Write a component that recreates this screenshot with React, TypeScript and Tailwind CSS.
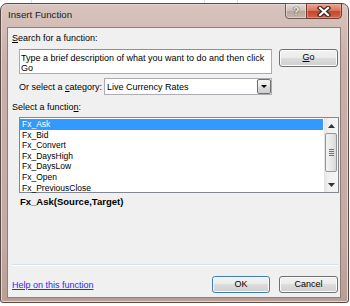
import React from 'react';

const font = { fontFamily: '"Liberation Sans", Arial, sans-serif' };

const btn =
  'flex items-center justify-center rounded-[3px] border text-[9px] text-black bg-[linear-gradient(#f2f2f2,#ebebeb_50%,#dddddd_50%,#cfcfcf)] shadow-[inset_0_0_0_1px_#fbfbfb]';

const functions = ['Fx_Ask', 'Fx_Bid', 'Fx_Convert', 'Fx_DaysHigh', 'Fx_DaysLow', 'Fx_Open', 'Fx_PreviousClose'];

function Caret({ up }: { up?: boolean }) {
  return (
    <svg width="7" height="4" viewBox="0 0 7 4">
      <path d={up ? 'M0 4 L3.5 0 L7 4 Z' : 'M0 0 L7 0 L3.5 4 Z'} fill="#333" />
    </svg>
  );
}

function TitleButtons() {
  return (
    <div className="flex -mt-[1px] mr-[6px]">
      <div className="w-[22px] h-[16px] flex items-center justify-center border border-[#6d5c57] rounded-bl-[4px] bg-[linear-gradient(#e6dcd8,#cdbdb8_50%,#b9a39c_50%,#c8b6b0)] shadow-[inset_0_0_0_1px_#f3ecea80]">
        <span className="text-[11px] font-bold leading-none text-[#f4f4f4] [text-shadow:0_0_1px_#333,0_0_1px_#333]">?</span>
      </div>
      <div className="w-[36px] h-[16px] -ml-[1px] flex items-center justify-center border border-[#6d3b30] rounded-br-[4px] bg-[linear-gradient(#e9a892,#d86f58_50%,#c4432b_50%,#d3654c)] shadow-[inset_0_0_0_1px_#f0b8a880]">
        <svg width="14" height="11" viewBox="0 0 14 11">
          <path d="M3 2 L11 9 M11 2 L3 9" stroke="#3d2520" strokeWidth="4.5" strokeLinecap="square" />
          <path d="M3 2 L11 9 M11 2 L3 9" stroke="#ffffff" strokeWidth="2.2" strokeLinecap="square" />
        </svg>
      </div>
    </div>
  );
}

function ListBox() {
  return (
    <div className="ml-[11px] w-[320px] h-[76px] border border-[#828790] bg-white flex">
      <div className="flex-1 pt-[1px] pr-[1px]">
        {functions.map((f, i) => (
          <div
            key={f}
            className={
              'h-[10.6px] pl-[2px] flex items-center text-[8.5px] leading-none ' +
              (i === 0 ? 'bg-[#3399ff] text-white' : 'text-black')
            }
          >
            {f}
          </div>
        ))}
      </div>
      <div className="w-[14px] flex flex-col bg-[linear-gradient(90deg,#e3e3e3,#f0f0f0_30%,#f5f5f5)]">
        <div className="h-[15px] flex items-center justify-center">
          <Caret up />
        </div>
        <div className="h-[39px] mx-[1px] rounded-[2px] border border-[#979797] bg-[linear-gradient(90deg,#f3f3f3,#e8e8e8_50%,#d9d9d9)] flex flex-col items-center justify-center gap-[1px]">
          <div className="w-[5px] h-[1px] bg-[#6f6f6f]" />
          <div className="w-[5px] h-[1px] bg-[#6f6f6f]" />
          <div className="w-[5px] h-[1px] bg-[#6f6f6f]" />
          <div className="w-[5px] h-[1px] bg-[#6f6f6f]" />
        </div>
        <div className="flex-1 flex items-end justify-center pb-[5px]">
          <Caret />
        </div>
      </div>
    </div>
  );
}

export default function App() {
  return (
    <div className="w-[350px] h-[306px] bg-white overflow-hidden" style={font}>
      <div className="h-[3px] flex">
        <div className="w-[32px] border-r border-[#d8dde6]" />
        <div className="w-[173px] border-r border-[#d8dde6]" />
        <div className="w-[33px] border-r border-[#d8dde6]" />
      </div>
      <div className="w-[349px] h-[300px] rounded-t-[7px] rounded-b-[3px] border border-[#5a4a46] bg-[linear-gradient(#d9c5be,#c9b0a8_20%,#c4aaa2_80%,#b99e96)] flex flex-col shadow-[inset_0_0_0_1px_#e3d5d0]">
        <div className="h-[23px] flex justify-between items-start">
          <div className="pl-[7px] pt-[5px] text-[9.7px] leading-[12px] text-[#1a1a1a]">Insert Function</div>
          <TitleButtons />
        </div>
        <div className="flex-1 ml-[6px] mr-[7px] mb-[4px] border border-[#8e7d78] bg-[#f0f0f0] flex flex-col">
          <div className="mt-[4px] ml-[4px] text-[9px] leading-[12px] text-black">
            <u>S</u>earch for a function:
          </div>
          <div className="mt-[5px] ml-[11px] flex items-start">
            <div className="w-[253px] h-[25px] border border-[#abadb3] border-t-[#8e8f8f] bg-white pl-[1px] pt-[3px] text-[9px] leading-[10px] text-black">
              Type a brief description of what you want to do and then click Go
            </div>
            <div className={btn + ' ml-[7px] w-[59px] h-[18px] border-[#707070]'}>
              <span>
                <u>G</u>o
              </span>
            </div>
          </div>
          <div className="mt-[4px] ml-[11px] h-[17px] flex items-center">
            <div className="w-[85px] text-[9px] leading-[12px] text-black">
              Or select a <u>c</u>ategory:
            </div>
            <div className="w-[168px] h-[17px] border border-[#abadb3] bg-white flex items-center">
              <div className="flex-1 pl-[2px] text-[9px] leading-[12px] text-black">Live Currency Rates</div>
              <div className="w-[14px] h-[15px] rounded-[2px] border border-[#707070] bg-[linear-gradient(#f2f2f2,#ebebeb_50%,#dddddd_50%,#cfcfcf)] flex items-center justify-center">
                <svg width="6" height="3" viewBox="0 0 6 3">
                  <path d="M0 0 L6 0 L3 3 Z" fill="#000" />
                </svg>
              </div>
            </div>
          </div>
          <div className="mt-[6px] ml-[4px] text-[9px] leading-[12px] text-black">
            Select a functio<u>n</u>:
          </div>
          <div className="mt-[4px]">
            <ListBox />
          </div>
          <div className="mt-[3px] ml-[12px] text-[9.5px] leading-[12px] font-bold text-black">Fx_Ask(Source,Target)</div>
          <div className="flex-1" />
          <div className="ml-[4px] w-[326px] h-[2px] border-t border-[#d5dfe5] border-b border-b-white" />
          <div className="mt-[10px] mb-[4px] h-[17px] flex items-center">
            <div className="ml-[4px] w-[200px] text-[9px] leading-[12px] text-[#2a2aff] underline">Help on this function</div>
            <div className={btn + ' w-[58px] h-[17px] border-[#3c7fb1] shadow-[inset_0_0_0_1px_#c8e6f7]'}>OK</div>
            <div className={btn + ' ml-[9px] w-[59px] h-[17px] border-[#707070]'}>Cancel</div>
          </div>
        </div>
      </div>
    </div>
  );
}
